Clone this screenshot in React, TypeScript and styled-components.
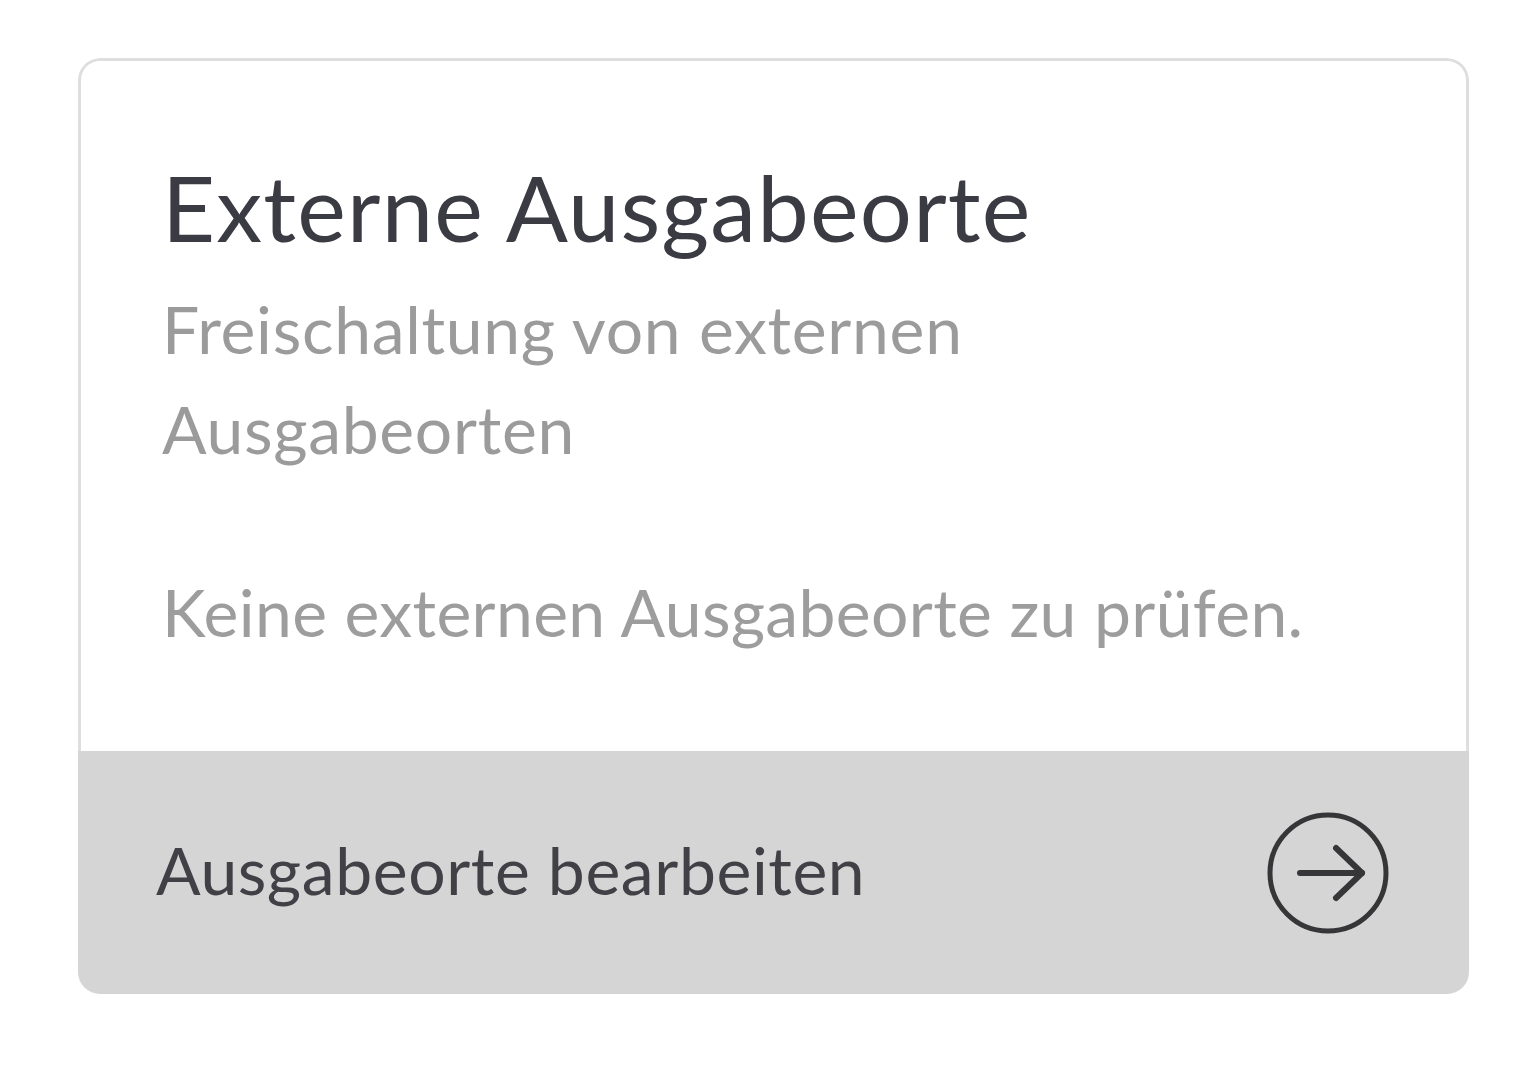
import React from "react";
import styled, { createGlobalStyle } from "styled-components";

const GlobalStyle = createGlobalStyle`
  html, body {
    margin: 0;
    padding: 0;
    background: #ffffff;
  }
  body {
    font-family: Lato, "Open Sans", "Liberation Sans", sans-serif;
    -webkit-font-smoothing: antialiased;
  }
`;

const Page = styled.div`
  padding: 58px 0 0 78px;
`;

const Card = styled.section`
  width: 1391px;
  border-radius: 22px;
  overflow: hidden;
  background: #ffffff;
  display: flex;
  flex-direction: column;
`;

const Body = styled.div`
  padding: 91px 78px 89px 81px;
  border: 3px solid #dedede;
  border-bottom: none;
  border-radius: 22px 22px 0 0;
  display: flex;
  flex-direction: column;
`;

const Title = styled.h2`
  margin: 0;
  font-size: 92px;
  line-height: 110px;
  font-weight: 400;
  letter-spacing: 1.2px;
  color: #3b3b43;
`;

const Subtitle = styled.p`
  margin: 17px 0 0 0;
  max-width: 900px;
  font-size: 66px;
  line-height: 100px;
  letter-spacing: 0.7px;
  color: #9b9b9b;
`;

const Note = styled.p`
  margin: 83px 0 0 0;
  font-size: 66px;
  line-height: 100px;
  letter-spacing: 0.35px;
  color: #9d9d9d;
`;

const Footer = styled.a`
  height: 243px;
  box-sizing: border-box;
  background: #d5d5d5;
  display: flex;
  align-items: center;
  justify-content: space-between;
  padding: 0 79px 6px 78px;
  text-decoration: none;
  cursor: pointer;
`;

const FooterLabel = styled.span`
  font-size: 66px;
  line-height: 100px;
  letter-spacing: 0.6px;
  color: #404046;
`;

const ArrowIcon = styled.svg`
  width: 124px;
  height: 124px;
  flex: none;
  margin-top: 6px;
`;

export default function App() {
  return (
    <>
      <GlobalStyle />
      <Page>
        <Card>
          <Body>
            <Title>Externe Ausgabeorte</Title>
            <Subtitle>Freischaltung von externen Ausgabeorten</Subtitle>
            <Note>Keine externen Ausgabeorte zu prüfen.</Note>
          </Body>
          <Footer>
            <FooterLabel>Ausgabeorte bearbeiten</FooterLabel>
            <ArrowIcon viewBox="0 0 124 124" fill="none" stroke="#363639">
              <circle cx="62" cy="62" r="58" strokeWidth="5" />
              <path d="M34 62 H96" strokeWidth="6" strokeLinecap="round" />
              <path d="M70 37 L96 62 L70 87" strokeWidth="6" strokeLinecap="round" strokeLinejoin="round" />
            </ArrowIcon>
          </Footer>
        </Card>
      </Page>
    </>
  );
}
